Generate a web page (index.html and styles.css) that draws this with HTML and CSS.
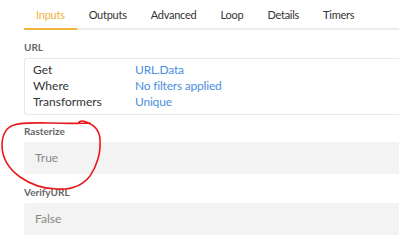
FILE: index.html
```html
<!DOCTYPE html>
<html>
<head>
<meta charset="utf-8">
<link rel="stylesheet" href="styles.css">
</head>
<body>
<div class="page">
  <nav class="tabs">
    <div class="tab active">Inputs</div>
    <div class="tab">Outputs</div>
    <div class="tab">Advanced</div>
    <div class="tab">Loop</div>
    <div class="tab">Details</div>
    <div class="tab">Timers</div>
  </nav>
  <section class="field field-url">
    <div class="label">URL</div>
    <div class="card">
      <div class="row"><span class="key">Get</span><span class="val">URL.Data</span></div>
      <div class="row"><span class="key">Where</span><span class="val">No filters applied</span></div>
      <div class="row"><span class="key">Transformers</span><span class="val">Unique</span></div>
    </div>
  </section>
  <section class="field field-raster">
    <div class="label">Rasterize</div>
    <div class="input">True</div>
  </section>
  <section class="field field-verify">
    <div class="label">VerifyURL</div>
    <div class="input">False</div>
  </section>
</div>
<svg class="scribble" width="110" height="75" viewBox="0 118 110 75">
  <path d="M79 122 C82 120 85 121 88 123 C95 125 100 132 100 140 C101 152 97 166 90 176 C82 186 70 190 57 189 C44 189 30 184 20 177 C9 169 2 158 2 145 C2 134 7 127 14 125 C22 122 35 123 50 123 C62 123 75 124 90 123"/>
</svg>
</body>
</html>
```
FILE: styles.css
```css
html, body {
  margin: 0;
  padding: 0;
  background: #fff;
}
.page {
  padding: 0 0 0 24px;
  font-family: Lato, "Liberation Sans", sans-serif;
  font-size: 12px;
  color: #333;
}
.tabs {
  display: flex;
  border-bottom: 2px solid #ececec;
  height: 28px;
}
.tab {
  padding: 0 12px;
  line-height: 29px;
  height: 28px;
  color: #333;
  font-size: 11px;
  letter-spacing: -0.25px;
}
.tab.active {
  color: #f2b33d;
  border-bottom: 2px solid #f2b33d;
}
.field-url {
  margin-top: 10px;
}
.field-raster {
  margin-top: 9px;
}
.field-verify {
  margin-top: 11px;
}
.label {
  font-size: 10px;
  font-weight: 700;
  color: #666;
  line-height: 14px;
  margin-bottom: 4px;
}
.card {
  border: 1px solid #e8e8e8;
  border-right: none;
  border-radius: 3px 0 0 3px;
  padding: 3px 8px 4px 8px;
}
.row {
  display: flex;
  line-height: 16px;
}
.key {
  width: 102px;
  color: #333;
}
.val {
  color: #4a8fe0;
  letter-spacing: -0.2px;
}
.input {
  background: #f3f3f3;
  border-radius: 3px 0 0 3px;
  height: 32px;
  line-height: 32px;
  padding-left: 11px;
  color: #888;
}
.scribble {
  position: absolute;
  left: 0;
  top: 118px;
  fill: none;
  stroke: #e8191a;
  stroke-width: 1.6;
  stroke-linecap: round;
}
```
